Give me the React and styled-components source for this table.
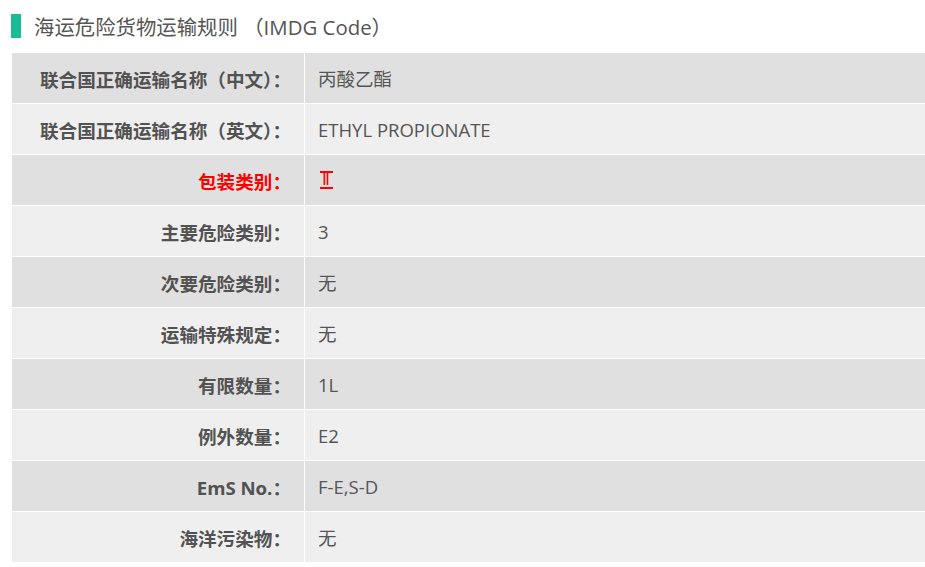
import React from 'react'
import styled, { createGlobalStyle } from 'styled-components'

const rows = [
    { label: '联合国正确运输名称（中文）：', value: '丙酸乙酯' },
    { label: '联合国正确运输名称（英文）：', value: 'ETHYL PROPIONATE' },
    { label: '包装类别：', value: 'Ⅱ', hot: true },
    { label: '主要危险类别：', value: '3' },
    { label: '次要危险类别：', value: '无' },
    { label: '运输特殊规定：', value: '无' },
    { label: '有限数量：', value: '1L' },
    { label: '例外数量：', value: 'E2' },
    { label: 'EmS No.：', value: 'F-E,S-D' },
    { label: '海洋污染物：', value: '无' },
]

function App() {
    return (
        <Page>
            <GlobalStyle />
            <Heading>
                <Mark />
                <h2>海运危险货物运输规则 （IMDG Code）</h2>
            </Heading>
            <Table>
                {rows.map((row, i) => (
                    <Row key={row.label} $odd={i % 2 === 0}>
                        <Label $hot={row.hot}>{row.label}</Label>
                        <Value $hot={row.hot}>
                            {row.hot ? <Numeral>{row.value}</Numeral> : row.value}
                        </Value>
                    </Row>
                ))}
            </Table>
        </Page>
    )
}

export default App

const GlobalStyle = createGlobalStyle`
    body{
        margin:0;
        background:#fff;
        font-family: "Open Sans", "Noto Sans CJK SC", sans-serif;
        color:#555;
    }
`;

const Page = styled.div`
    width:925px;
    height:567px;
    overflow:hidden;
    padding-left:11px;
    box-sizing:border-box;
`;

const Heading = styled.div`
    display:flex;
    align-items:center;
    height:53px;
    padding-bottom:1px;
    box-sizing:border-box;
    >h2{
        margin:0 0 0 13px;
        font-size:20.4px;
        font-weight:normal;
        color:#555;
    }
`;

const Mark = styled.span`
    width:10px;
    height:24px;
    background:#1abc96;
`;

const Table = styled.div`
    margin-left:1px;
    display:flex;
    flex-direction:column;
    gap:1px;
    background:#fff;
`;

const Row = styled.div`
    display:grid;
    grid-template-columns:292px 1fr;
    column-gap:1px;
    height:50px;
    >div{
        background:${p => p.$odd ? '#e0e0e0' : '#efefef'};
    }
`;

const Label = styled.div`
    display:flex;
    align-items:center;
    justify-content:flex-end;
    padding-right:13px;
    font-size:18.6px;
    font-weight:bold;
    color:${p => p.$hot ? '#ff0000' : '#525252'};
`;

const Value = styled.div`
    display:flex;
    align-items:center;
    padding-left:13px;
    font-size:18.5px;
    color:${p => p.$hot ? '#ff0000' : '#555'};
`;

/* roman numeral drawn with bars, like the CJK glyph */
const Numeral = styled.span`
    display:inline-block;
    margin-left:2px;
    padding:0 2px;
    line-height:14px;
    font-size:16px;
    font-family:"Liberation Sans", sans-serif;
    letter-spacing:1px;
    border-top:2px solid #ff0000;
    border-bottom:2px solid #ff0000;
`;
